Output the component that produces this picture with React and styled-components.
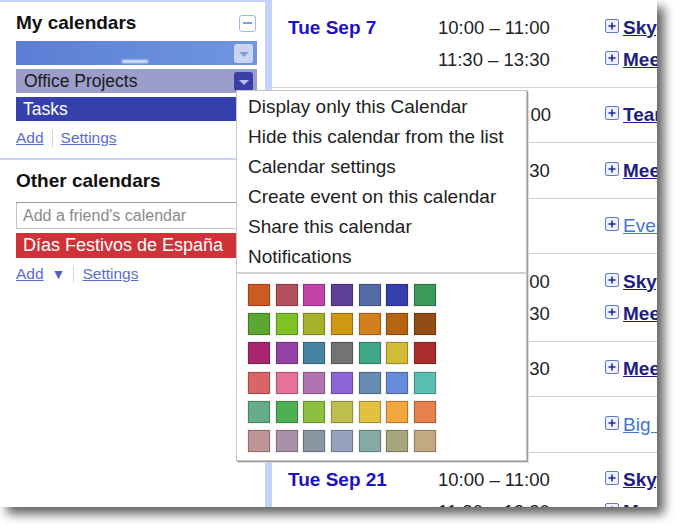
import React from 'react'
import styled, { createGlobalStyle } from 'styled-components'

const GlobalStyle = createGlobalStyle`
    html, body {
        margin: 0;
        padding: 0;
        background: #fff;
    }
    body {
        font-family: "Liberation Sans", Arial, sans-serif;
    }
`;

const Page = styled.div`
    width: 680px;
    height: 531px;
    overflow: hidden;
    background: #fff;
`;

const Frame = styled.div`
    position: relative;
    width: 657px;
    height: 507px;
    overflow: hidden;
    display: grid;
    grid-template-columns: 265px 1fr;
    background: #fff;
    box-shadow: 7px 7px 10px rgba(0, 0, 0, 0.62);
`;

/* ---------- sidebar ---------- */

const Sidebar = styled.div`
    border-top: 2px solid #c3d3fb;
`;

const Section = styled.div`
    padding: 8px 8px ${p => p.$bottom || 0}px 16px;
    border-bottom: ${p => (p.$divider ? '2px solid #c3d3fb' : 'none')};
`;

const Header = styled.div`
    height: 26px;
    display: flex;
    align-items: center;
    justify-content: space-between;
`;

const Heading = styled.div`
    font-size: 19px;
    font-weight: 700;
    color: #111;
    white-space: nowrap;
`;

const MinusBox = styled.div`
    width: 17px;
    height: 17px;
    box-sizing: border-box;
    margin-right: 1px;
    border: 1px solid #9fb5ef;
    border-radius: 3px;
    display: flex;
    align-items: center;
    justify-content: center;
    span {
        width: 9px;
        height: 2px;
        background: #7f9de6;
    }
`;

const CalList = styled.div`
    margin-top: 5px;
    display: flex;
    flex-direction: column;
    gap: 4px;
`;

const CalRow = styled.div`
    height: ${p => p.$h || 24}px;
    margin-top: ${p => p.$mt || 0}px;
    display: flex;
    align-items: center;
    padding: 0 4px 0 ${p => p.$pl || 8}px;
    background: ${p => p.$bg};
    color: ${p => p.$fg};
    font-size: ${p => p.$fs || 17.5}px;
    white-space: nowrap;
    overflow: hidden;
`;

const Smudge = styled.span`
    align-self: flex-end;
    width: 26px;
    height: 3px;
    margin: 0 0 2px 98px;
    background: rgba(255, 255, 255, 0.85);
    filter: blur(1px);
`;

const DropBtn = styled.div`
    margin-left: auto;
    width: 19px;
    height: 19px;
    border-radius: 3px;
    background: ${p => p.$bg};
    display: flex;
    align-items: center;
    justify-content: center;
    &::after {
        content: '';
        margin-top: 2px;
        border-left: 5px solid transparent;
        border-right: 5px solid transparent;
        border-top: 5px solid ${p => p.$arrow};
    }
`;

const LinkRow = styled.div`
    margin-top: ${p => p.$mt}px;
    height: 18px;
    display: flex;
    align-items: center;
    font-size: 15.5px;
    color: #5a6ccf;
`;

const SideLink = styled.span`
    text-decoration: underline;
    cursor: pointer;
`;

const Arrow = styled.span`
    font-size: 14px;
    margin-left: 8px;
    color: #4f5fc4;
`;

const Sep = styled.span`
    width: 1px;
    height: 17px;
    margin: 0 8px;
    background: #d4d4d4;
`;

const FriendInput = styled.input`
    display: block;
    width: 100%;
    height: 27px;
    box-sizing: border-box;
    margin-top: 8px;
    padding: 0 6px;
    border: 1px solid #c4c4c4;
    border-top-color: #999;
    font-family: inherit;
    font-size: 16px;
    color: #333;
    &::placeholder {
        color: #8a8a8a;
    }
`;

/* ---------- agenda ---------- */

const Main = styled.div`
    border-left: 7px solid #c3d3fb;
`;

const DayGroup = styled.div`
    display: flex;
    padding: 11.5px 0 11px 16px;
    border-bottom: 1px solid #d2d2d2;
`;

const DateCol = styled.div`
    width: 150px;
    flex: none;
    height: 32px;
    line-height: 32px;
    font-size: 19px;
    font-weight: 700;
    color: #1d12c2;
    white-space: nowrap;
`;

const Events = styled.div`
    display: flex;
    flex-direction: column;
`;

const EventRow = styled.div`
    height: 32px;
    display: flex;
    align-items: center;
`;

const Time = styled.div`
    width: 167px;
    flex: none;
    font-size: 18.5px;
    color: #222;
    white-space: nowrap;
`;

const PlusIcon = styled.svg`
    flex: none;
    margin-bottom: 4px;
`;

const EventLink = styled.span`
    margin-left: 4px;
    font-size: 19px;
    font-weight: ${p => (p.$light ? 400 : 700)};
    color: ${p => (p.$light ? '#4672d6' : '#1e1e80')};
    text-decoration: underline;
    white-space: nowrap;
`;

/* ---------- popup menu ---------- */

const Popup = styled.div`
    position: absolute;
    left: 236px;
    top: 90px;
    width: 291px;
    box-sizing: border-box;
    padding-top: 1px;
    background: #fff;
    border: 1px solid #c6c6c6;
    box-shadow: 1px 1px 0 #9c9c9c, 2px 2px 0 #dcdcdc;
`;

const MenuItem = styled.div`
    height: 30px;
    line-height: 30px;
    padding-left: 11px;
    font-size: 19px;
    color: #222;
    white-space: nowrap;
`;

const MenuSep = styled.div`
    height: 2px;
    background: #d0d0d0;
`;

const Swatches = styled.div`
    display: grid;
    grid-template-columns: repeat(7, 22px);
    column-gap: 5.7px;
    row-gap: 7.2px;
    padding: 10px 0 8px 11px;
`;

const Swatch = styled.div`
    width: 22px;
    height: 22px;
    box-sizing: border-box;
    background: ${p => p.$c};
    border: 1px solid rgba(0, 0, 0, 0.25);
    box-shadow: 0 0 0 1px rgba(0, 0, 0, 0.06);
`;

const palette = [
    '#cc5a21', '#b5515d', '#c244ab', '#603f99', '#536ca6', '#3640ad', '#3c995b',
    '#5ca632', '#7ec225', '#a8b12a', '#cf9911', '#d47f1e', '#b56414', '#914d14',
    '#ab2671', '#9643a5', '#4585a3', '#737373', '#41a587', '#d1bc36', '#ad2d2d',
    '#d96666', '#e67399', '#b373b3', '#8c66d9', '#668cb3', '#668cd9', '#59bfb3',
    '#65ad89', '#4cb052', '#8cbf40', '#bfbf4d', '#e0c240', '#f2a640', '#e6804d',
    '#be9494', '#a992a9', '#8997a5', '#94a2be', '#85aaa5', '#a7a77d', '#c4a883',
];

const menuItems = [
    'Display only this Calendar',
    'Hide this calendar from the list',
    'Calendar settings',
    'Create event on this calendar',
    'Share this calendar',
    'Notifications',
];

const agenda = [
    { date: 'Tue Sep 7', events: [
        { time: '10:00 – 11:00', title: 'Skype call' },
        { time: '11:30 – 13:30', title: 'Meeting' },
    ] },
    { date: 'Wed Sep 8', events: [{ time: '12:00 – 13:00', title: 'Team lunch' }] },
    { date: 'Thu Sep 9', events: [{ time: '11:30 – 13:30', title: 'Meeting' }] },
    { date: 'Fri Sep 10', events: [{ time: '', title: 'Event', light: true }] },
    { date: 'Tue Sep 14', events: [
        { time: '10:00 – 11:00', title: 'Skype call' },
        { time: '11:30 – 13:30', title: 'Meeting' },
    ] },
    { date: 'Thu Sep 16', events: [{ time: '11:30 – 13:30', title: 'Meeting' }] },
    { date: 'Fri Sep 17', events: [{ time: '', title: 'Big launch', light: true }] },
    { date: 'Tue Sep 21', events: [
        { time: '10:00 – 11:00', title: 'Skype call' },
        { time: '11:30 – 13:30', title: 'Meeting' },
    ] },
];

function Plus() {
    return (
        <PlusIcon width="14" height="14" viewBox="0 0 14 14">
            <rect x="0.5" y="0.5" width="13" height="13" rx="1.5" fill="#eef1fb" stroke="#5f78d0" />
            <path d="M3.5 7h7M7 3.5v7" stroke="#1f2a9c" strokeWidth="1.6" />
        </PlusIcon>
    );
}

export default function App() {
    return (
        <Page>
            <GlobalStyle />
            <Frame>
                <Sidebar>
                    <Section $divider $bottom={11}>
                        <Header>
                            <Heading>My calendars</Heading>
                            <MinusBox><span /></MinusBox>
                        </Header>
                        <CalList>
                            <CalRow $bg="linear-gradient(90deg, #5b7ed5, #7096df)" $fg="#fff">
                                <Smudge />
                                <DropBtn $bg="#c9d5f1" $arrow="#7f9ee0" />
                            </CalRow>
                            <CalRow $bg="#9c9dca" $fg="#1a1a1a">
                                Office Projects
                                <DropBtn $bg="#3a3fa8" $arrow="#b8c0ea" />
                            </CalRow>
                            <CalRow $bg="#3640ad" $fg="#fff" $pl={7}>Tasks</CalRow>
                        </CalList>
                        <LinkRow $mt={8}>
                            <SideLink>Add</SideLink>
                            <Sep />
                            <SideLink>Settings</SideLink>
                        </LinkRow>
                    </Section>
                    <Section>
                        <Header>
                            <Heading>Other calendars</Heading>
                        </Header>
                        <FriendInput placeholder="Add a friend's calendar" />
                        <CalRow $bg="#cf333a" $fg="#fff" $h={25} $mt={4} $pl={7} $fs={18}>
                            Días Festivos de España
                        </CalRow>
                        <LinkRow $mt={7}>
                            <SideLink>Add</SideLink>
                            <Arrow>▼</Arrow>
                            <Sep />
                            <SideLink>Settings</SideLink>
                        </LinkRow>
                    </Section>
                </Sidebar>

                <Main>
                    {agenda.map(day => (
                        <DayGroup key={day.date}>
                            <DateCol>{day.date}</DateCol>
                            <Events>
                                {day.events.map((ev, i) => (
                                    <EventRow key={i}>
                                        <Time>{ev.time}</Time>
                                        <Plus />
                                        <EventLink $light={ev.light}>{ev.title}</EventLink>
                                    </EventRow>
                                ))}
                            </Events>
                        </DayGroup>
                    ))}
                </Main>

                <Popup>
                    {menuItems.map(item => (
                        <MenuItem key={item}>{item}</MenuItem>
                    ))}
                    <MenuSep />
                    <Swatches>
                        {palette.map(c => (
                            <Swatch key={c} $c={c} />
                        ))}
                    </Swatches>
                </Popup>
            </Frame>
        </Page>
    );
}
